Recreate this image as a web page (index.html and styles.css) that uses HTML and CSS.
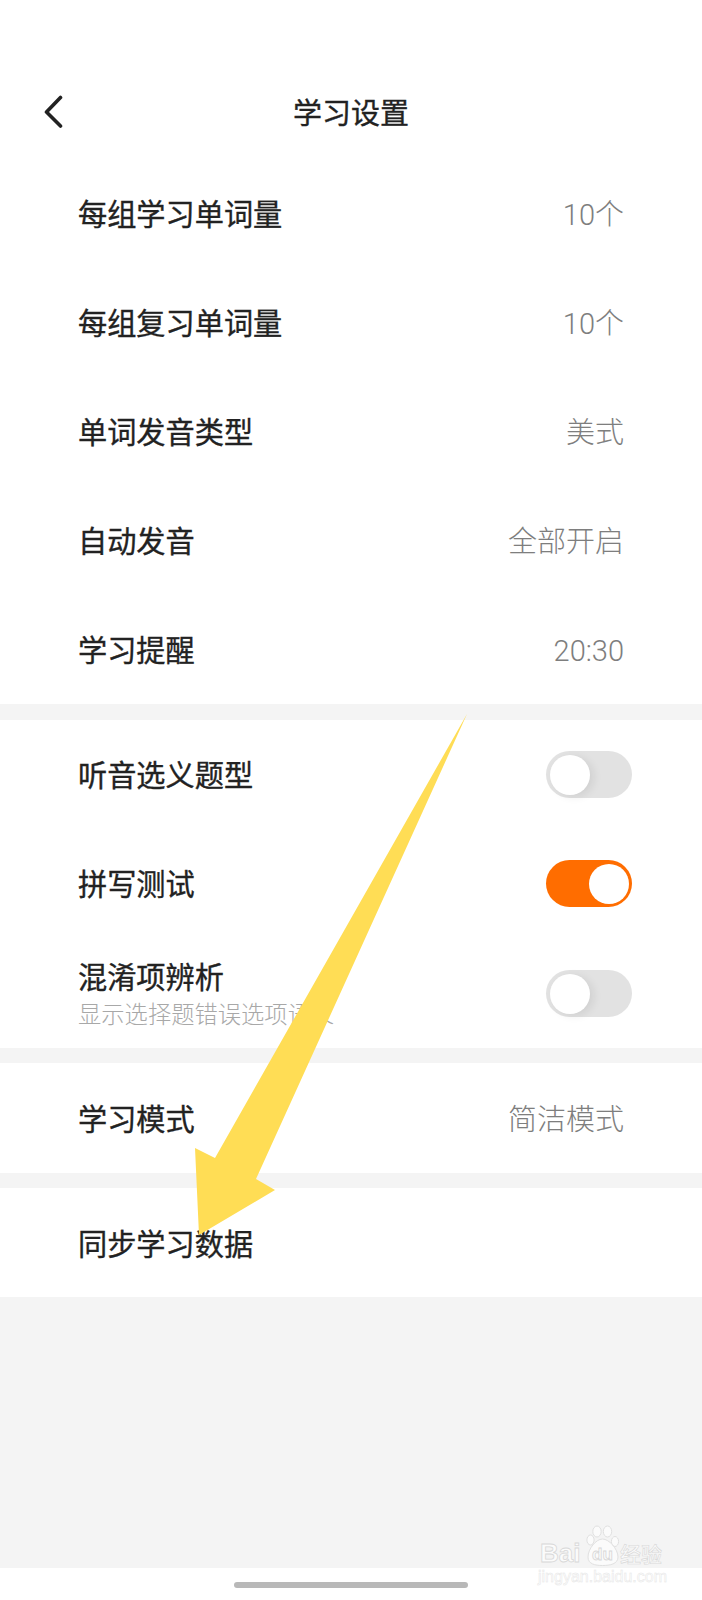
FILE: index.html
```html
<!DOCTYPE html>
<html lang="zh-CN">
<head>
<meta charset="utf-8">
<title>学习设置</title>
<link rel="stylesheet" href="styles.css">
</head>
<body>
<div class="page">
  <header class="header">
    <svg class="back" width="20" height="34" viewBox="0 0 20 34"><path d="M16.5 2.5 L2.5 17 L16.5 31" fill="none" stroke="#222" stroke-width="3.6" stroke-linecap="round" stroke-linejoin="round"/></svg>
    <h1 class="title">学习设置</h1>
  </header>
  <section class="group group-first">
    <div class="row"><span class="label">每组学习单词量</span><span class="value">10个</span></div>
    <div class="row"><span class="label">每组复习单词量</span><span class="value">10个</span></div>
    <div class="row"><span class="label">单词发音类型</span><span class="value">美式</span></div>
    <div class="row"><span class="label">自动发音</span><span class="value">全部开启</span></div>
    <div class="row row-wide"><span class="label">学习提醒</span><span class="value">20:30</span></div>
  </section>
  <section class="group group-second">
    <div class="row"><span class="label">听音选义题型</span><span class="toggle"></span></div>
    <div class="row"><span class="label">拼写测试</span><span class="toggle on"></span></div>
    <div class="row row-wide">
      <div class="stack"><span class="label">混淆项辨析</span><span class="sub">显示选择题错误选项语义</span></div>
      <span class="toggle"></span>
    </div>
  </section>
  <section class="group group-third">
    <div class="row row-wide"><span class="label">学习模式</span><span class="value">简洁模式</span></div>
  </section>
  <section class="group group-last">
    <div class="row"><span class="label">同步学习数据</span></div>
  </section>
  <div class="filler"></div>
  <div class="homebar"><span class="handle"></span></div>

  <svg class="arrow" width="702" height="1600" viewBox="0 0 702 1600"><polygon points="467,714 256,1179 275,1190 199,1235 195,1148 215,1158" fill="#ffdd55"/></svg>

  <div class="watermark">
    <svg class="wm-paw" width="34" height="42" viewBox="0 0 34 42">
      <g fill="#fbfbfb" stroke="#e0e0e0" stroke-width="1">
        <ellipse cx="11" cy="6.5" rx="4.2" ry="5.5"/>
        <ellipse cx="21.5" cy="6.5" rx="4.2" ry="5.5"/>
        <ellipse cx="4.5" cy="15" rx="3.6" ry="5"/>
        <ellipse cx="29" cy="16.5" rx="3.6" ry="5"/>
        <path d="M16.5 14 C10 14 2 24 2 32 C2 39 9 40.5 16.5 40.5 C24 40.5 32 39 32 32 C32 24 23 14 16.5 14 Z"/>
      </g>
    </svg>
    <span class="wm-bai">Bai</span>
    <span class="wm-du">du</span>
    <span class="wm-cn">经验</span>
    <span class="wm-url">jingyan.baidu.com</span>
  </div>
</div>
</body>
</html>
```
FILE: styles.css
```css
* { box-sizing: border-box; }
html, body { margin: 0; padding: 0; background: #fff; }
body { font-family: "Noto Sans CJK SC", "Noto Sans", sans-serif; color: #222; }
.page { position: relative; width: 702px; height: 1600px; overflow: hidden; display: flex; flex-direction: column; background: #f4f4f4; }

.header { position: relative; height: 158px; padding-top: 64px; display: flex; align-items: center; justify-content: center; background: #fff; }
.back { position: absolute; left: 44px; top: 95px; }
.title { margin: 0; font-size: 29px; font-weight: 400; -webkit-text-stroke: 0.35px #222; line-height: 40px; color: #222; }

.group { background: #fff; display: flex; flex-direction: column; }
.group-first { margin-bottom: 16px; }
.group-second { margin-bottom: 15px; }
.group-third { margin-bottom: 15px; }

.row { height: 109px; padding: 0 70px 0 78px; display: flex; align-items: center; justify-content: space-between; }
.row-wide { height: 110px; }
.label { font-size: 29.2px; font-weight: 400; -webkit-text-stroke: 0.35px #222; line-height: 40px; color: #222; padding-bottom: 2px; }
.group-second .row > .label { padding-bottom: 3px; }
.value { font-family: "Roboto", "Noto Sans CJK SC", sans-serif; font-size: 29px; font-weight: 300; line-height: 40px; color: #7e7e7e; padding: 4px 8px 0 0; }

.stack { display: flex; flex-direction: column; padding-bottom: 2px; }
.stack .label { padding-bottom: 0; }
.sub { font-size: 23.3px; font-weight: 300; line-height: 32px; color: #a8a8a8; margin-top: 2px; }

.toggle { position: relative; width: 86px; height: 47px; border-radius: 24px; background: #e2e2e2; flex: none; }
.toggle::after { content: ""; position: absolute; left: 4px; top: 4px; width: 40px; height: 40px; border-radius: 50%; background: #fff; box-shadow: 4px 2px 8px rgba(0, 0, 0, 0.08); }
.toggle.on { background: #ff6d00; }
.toggle.on::after { left: 43px; box-shadow: none; }

.filler { height: 271px; background: #f4f4f4; flex: none; }

.homebar { flex: 1; background: #fff; display: flex; justify-content: center; padding-top: 14px; }
.handle { width: 234px; height: 6px; border-radius: 3px; background: #b8b8b8; }

.arrow { position: absolute; left: 0; top: 0; pointer-events: none; }

.watermark { position: absolute; left: 538px; top: 1524px; width: 130px; height: 60px; font-family: "Liberation Sans", sans-serif; }
.wm-paw { position: absolute; left: 48px; top: 1px; }
.wm-bai { position: absolute; left: 2px; top: 16px; font-size: 26px; font-weight: 700; line-height: 26px; color: #fbfbfb; -webkit-text-stroke: 0.8px #d8d8d8; }
.wm-du { position: absolute; left: 54px; top: 21px; font-size: 17px; font-weight: 700; line-height: 20px; color: #fbfbfb; -webkit-text-stroke: 0.8px #d8d8d8; }
.wm-cn { position: absolute; left: 82px; top: 15px; font-family: "Noto Sans CJK SC", sans-serif; font-size: 21px; line-height: 28px; font-weight: 500; color: #fbfbfb; -webkit-text-stroke: 0.6px #d8d8d8; }
.wm-url { position: absolute; left: 0; top: 45px; font-size: 16px; line-height: 16px; color: #fff; -webkit-text-stroke: 0.5px #e6e6e6; white-space: nowrap; }
```
